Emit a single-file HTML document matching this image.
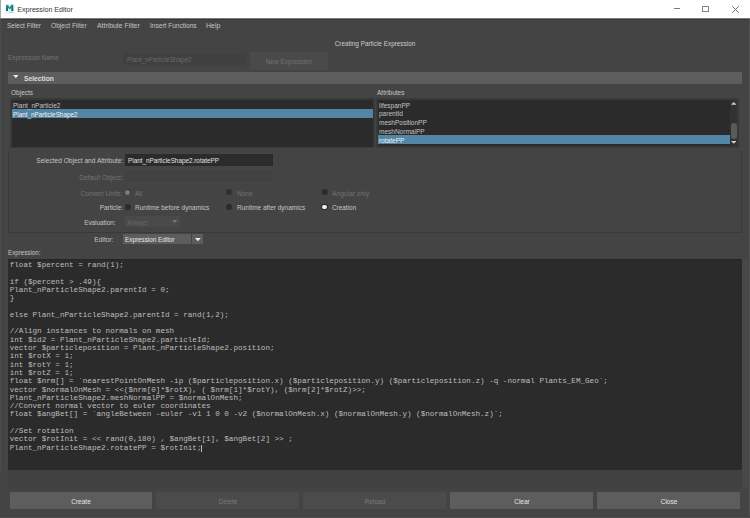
<!DOCTYPE html>
<html><head><meta charset="utf-8">
<style>
*{margin:0;padding:0;box-sizing:border-box}
html,body{width:750px;height:518px;overflow:hidden;background:#444444}
body{position:relative;font-family:"Liberation Sans",sans-serif;font-size:7.3px;color:#c4c4c4}
.a{position:absolute;white-space:nowrap}
.s{line-height:10px;-webkit-text-stroke:0px currentColor}
</style></head><body>
<div class="a" style="left:0px;top:0px;width:750px;height:18px;background:#ffffff;"></div>
<div class="a" style="left:0px;top:18px;width:750px;height:1px;background:#7a7a7a;"></div>
<div class="a" style="left:0px;top:19px;width:750px;height:1px;background:#383838;"></div>
<svg class="a" style="left:0;top:0" width="18" height="18" viewBox="0 0 18 18">
<defs><linearGradient id="mg" x1="0" y1="0" x2="0" y2="1"><stop offset="0" stop-color="#1a9a98"/><stop offset="1" stop-color="#08605f"/></linearGradient></defs>
<rect x="4.9" y="3.9" width="10" height="10" fill="#eaf5f5"/>
<path d="M6.1 10.9 V4.9 H8.1 L9.7 7.8 L11.1 4.8 H13.3 V10.9 H11.3 V7.4 L9.8 9.6 L8.1 7.4 V10.9 Z" fill="url(#mg)"/>
<rect x="8.8" y="11.6" width="4.2" height="1" fill="#86d3cf"/>
</svg>
<div class="a s" style="left:17.3px;transform-origin:0 50%;top:4.84px;color:#333333;transform:scaleX(1.0);font-size:7.1px;">Expression Editor</div>
<div class="a" style="left:674px;top:8px;width:6px;height:1px;background:#7c7c7c;"></div>
<div class="a" style="left:702px;top:5.6px;width:6.6px;height:6.4px;border:1px solid #858585;border-radius:0.6px"></div>
<svg class="a" style="left:731.9px;top:5.9px" width="7" height="7" viewBox="0 0 7 7"><path d="M0.3 0.3 L6.7 6.7 M6.7 0.3 L0.3 6.7" stroke="#6a6a6a" stroke-width="1"/></svg>
<div class="a s" style="left:6.7px;transform-origin:0 50%;top:21.3px;color:#c4c4c4;transform:scaleX(0.826);font-size:7.8px;">Select Filter</div>
<div class="a s" style="left:51.2px;transform-origin:0 50%;top:21.3px;color:#c4c4c4;transform:scaleX(0.847);font-size:7.8px;">Object Filter</div>
<div class="a s" style="left:97.2px;transform-origin:0 50%;top:21.3px;color:#c4c4c4;transform:scaleX(0.88);font-size:7.8px;">Attribute Filter</div>
<div class="a s" style="left:150px;transform-origin:0 50%;top:21.3px;color:#c4c4c4;transform:scaleX(0.84);font-size:7.8px;">Insert Functions</div>
<div class="a s" style="left:206.4px;transform-origin:0 50%;top:21.3px;color:#c4c4c4;transform:scaleX(0.904);font-size:7.8px;">Help</div>
<div class="a s" style="left:175px;width:400px;text-align:center;transform-origin:50% 50%;top:38.6px;color:#cccccc;transform:scaleX(0.819);font-size:7.8px;">Creating Particle Expression</div>
<div class="a s" style="left:7.9px;transform-origin:0 50%;top:53.1px;color:#737373;transform:scaleX(0.825);font-size:7.8px;">Expression Name</div>
<div class="a" style="left:123px;top:53px;width:124px;height:12.2px;background:#404040;"></div>
<div class="a s" style="left:126.7px;transform-origin:0 50%;top:54.7px;color:#6a6a6a;transform:scaleX(0.813);font-size:7.8px;">Plant_nParticleShape2</div>
<div class="a" style="left:249.8px;top:51.8px;width:78.2px;height:18.1px;background:#4a4a4a;"></div>
<div class="a s" style="left:88.5px;width:400px;text-align:center;transform-origin:50% 50%;top:56.8px;color:#727272;transform:scaleX(0.827);font-size:7.8px;">New Expression</div>
<div class="a" style="left:7.8px;top:72px;width:734.2px;height:11.5px;background:#5d5d5d;"></div>
<svg class="a" style="left:12.5px;top:74.9px" width="5.7" height="3.2" viewBox="0 0 5.7 3.2"><path d="M0 0 H5.7 L2.85 3.2 Z" fill="#e8e8e8"/></svg>
<div class="a s" style="left:24.3px;top:73.8px;font-weight:bold;color:#dddddd;transform:scaleX(0.92);transform-origin:0 50%">Selection</div>
<div class="a s" style="left:10.8px;transform-origin:0 50%;top:88.0px;color:#c4c4c4;transform:scaleX(0.835);font-size:7.8px;">Objects</div>
<div class="a s" style="left:376.8px;transform-origin:0 50%;top:88.0px;color:#c4c4c4;transform:scaleX(0.835);font-size:7.8px;">Attributes</div>
<div class="a" style="left:10px;top:98.3px;width:364.5px;height:49.8px;background:#393939;border-radius:2px"></div>
<div class="a" style="left:11.5px;top:99.8px;width:361.7px;height:46.8px;background:#2b2b2b;"></div>
<div class="a" style="left:11.5px;top:109px;width:361.7px;height:8.8px;background:#5285a6;"></div>
<div class="a s" style="left:12.5px;transform-origin:0 50%;top:100.8px;color:#c4c4c4;transform:scaleX(0.835);font-size:7.8px;">Plant_nParticle2</div>
<div class="a s" style="left:12.5px;transform-origin:0 50%;top:109.5px;color:#f2f2f2;transform:scaleX(0.813);font-size:7.8px;">Plant_nParticleShape2</div>
<div class="a" style="left:375.8px;top:98.3px;width:363px;height:49.8px;background:#393939;border-radius:2px"></div>
<div class="a" style="left:377.5px;top:99.9px;width:352.1px;height:46.6px;background:#2b2b2b;"></div>
<div class="a" style="left:729.6px;top:99.9px;width:7.2px;height:46.6px;background:#323232;"></div>
<div class="a s" style="left:378.9px;transform-origin:0 50%;top:100.7px;color:#c4c4c4;transform:scaleX(0.835);font-size:7.8px;">lifespanPP</div>
<div class="a s" style="left:378.9px;transform-origin:0 50%;top:109.4px;color:#c4c4c4;transform:scaleX(0.835);font-size:7.8px;">parentId</div>
<div class="a s" style="left:378.9px;transform-origin:0 50%;top:118.1px;color:#c4c4c4;transform:scaleX(0.835);font-size:7.8px;">meshPositionPP</div>
<div class="a s" style="left:378.9px;transform-origin:0 50%;top:126.8px;color:#c4c4c4;transform:scaleX(0.835);font-size:7.8px;">meshNormalPP</div>
<div class="a" style="left:377.5px;top:135.3px;width:352.1px;height:8.8px;background:#5285a6;"></div>
<div class="a s" style="left:378.9px;transform-origin:0 50%;top:135.5px;color:#f2f2f2;transform:scaleX(0.835);font-size:7.8px;">rotatePP</div>
<svg class="a" style="left:730.8px;top:102.4px" width="5.6" height="2.8" viewBox="0 0 5.6 2.8"><path d="M0 2.8 H5.6 L2.8 0 Z" fill="#cfcfcf"/></svg>
<div class="a" style="left:730.8px;top:122.9px;width:6px;height:16px;border-radius:3px;background:#5a5a5a"></div>
<svg class="a" style="left:730.8px;top:141.3px" width="5.6" height="2.8" viewBox="0 0 5.6 2.8"><path d="M0 0 H5.6 L2.8 2.8 Z" fill="#cfcfcf"/></svg>
<div class="a" style="left:8px;top:151.3px;width:734px;height:81.6px;border:1px solid #3a3a3a;border-top-color:#424242"></div>
<div class="a s" style="right:627.2px;transform-origin:100% 50%;top:155.5px;color:#c4c4c4;transform:scaleX(0.842);font-size:7.8px;">Selected Object and Attribute:</div>
<div class="a" style="left:124.5px;top:153.6px;width:148.2px;height:12px;background:#2b2b2b;"></div>
<div class="a s" style="left:128.3px;transform-origin:0 50%;top:156.1px;color:#e4e4e4;transform:scaleX(0.813);font-size:7.8px;">Plant_nParticleShape2.rotatePP</div>
<div class="a s" style="right:627.2px;transform-origin:100% 50%;top:172.8px;color:#737373;transform:scaleX(0.841);font-size:7.8px;">Default Object:</div>
<div class="a" style="left:124.5px;top:170.4px;width:148.2px;height:12px;background:#414141;"></div>
<div class="a s" style="right:627.2px;transform-origin:100% 50%;top:188.9px;color:#737373;transform:scaleX(0.848);font-size:7.8px;">Convert Units:</div>
<div class="a" style="left:124.6px;top:189.4px;width:6.0px;height:6.0px;border-radius:50%;background:#333333"></div>
<div class="a" style="left:125.3px;top:190.1px;width:4.6px;height:4.6px;border-radius:50%;background:#7a7a7a"></div>
<div class="a s" style="left:135.3px;transform-origin:0 50%;top:188.9px;color:#737373;transform:scaleX(0.835);font-size:7.8px;">All</div>
<div class="a" style="left:226.0px;top:189.4px;width:6.0px;height:6.0px;border-radius:50%;background:#2e2e2e"></div>
<div class="a s" style="left:236.7px;transform-origin:0 50%;top:188.9px;color:#737373;transform:scaleX(0.835);font-size:7.8px;">None</div>
<div class="a" style="left:321.8px;top:189.3px;width:6.0px;height:6.0px;border-radius:50%;background:#2d2d2d"></div>
<div class="a s" style="left:332.4px;transform-origin:0 50%;top:188.9px;color:#737373;transform:scaleX(0.853);font-size:7.8px;">Angular only</div>
<div class="a s" style="right:627.2px;transform-origin:100% 50%;top:203.2px;color:#c4c4c4;transform:scaleX(0.835);font-size:7.8px;">Particle:</div>
<div class="a" style="left:124.6px;top:204.1px;width:6.0px;height:6.0px;border-radius:50%;background:#2b2b2b"></div>
<div class="a s" style="left:135.4px;transform-origin:0 50%;top:203.2px;color:#c4c4c4;transform:scaleX(0.839);font-size:7.8px;">Runtime before dynamics</div>
<div class="a" style="left:226.0px;top:204.1px;width:6.0px;height:6.0px;border-radius:50%;background:#2b2b2b"></div>
<div class="a s" style="left:236.9px;transform-origin:0 50%;top:203.2px;color:#c4c4c4;transform:scaleX(0.832);font-size:7.8px;">Runtime after dynamics</div>
<div class="a" style="left:321.3px;top:203.8px;width:6.4px;height:6.4px;border-radius:50%;background:#2b2b2b"></div>
<div class="a" style="left:322.1px;top:204.6px;width:4.8px;height:4.8px;border-radius:50%;background:#eeeeee"></div>
<div class="a s" style="left:332.4px;transform-origin:0 50%;top:203.2px;color:#c4c4c4;transform:scaleX(0.821);font-size:7.8px;">Creation</div>
<div class="a s" style="right:634.4px;transform-origin:100% 50%;top:218.3px;color:#c4c4c4;transform:scaleX(0.814);font-size:7.8px;">Evaluation:</div>
<div class="a" style="left:125px;top:216px;width:55px;height:11px;background:#4a4a4a;"></div>
<div class="a s" style="left:126.8px;transform-origin:0 50%;top:217.8px;color:#666666;transform:scaleX(0.835);font-size:7.8px;">Always</div>
<svg class="a" style="left:172.3px;top:220.3px" width="5.5" height="3" viewBox="0 0 5.5 3"><path d="M0 0 H5.5 L2.75 3 Z" fill="#777777"/></svg>
<div class="a s" style="right:636px;transform-origin:100% 50%;top:234.7px;color:#c4c4c4;transform:scaleX(0.856);font-size:7.8px;">Editor:</div>
<div class="a" style="left:123px;top:233.8px;width:68px;height:10.6px;background:#5d5d5d;"></div>
<div class="a" style="left:191.5px;top:233.8px;width:11.5px;height:10.6px;background:#5d5d5d;"></div>
<div class="a s" style="left:125px;transform-origin:0 50%;top:234.6px;color:#e8e8e8;transform:scaleX(0.811);font-size:7.8px;">Expression Editor</div>
<svg class="a" style="left:194.8px;top:237.5px" width="5.8" height="3.3" viewBox="0 0 5.8 3.3"><path d="M0 0 H5.8 L2.9 3.3 Z" fill="#eeeeee"/></svg>
<div class="a s" style="left:7.6px;transform-origin:0 50%;top:247.6px;color:#c4c4c4;transform:scaleX(0.795);font-size:7.8px;">Expression:</div>
<div class="a" style="left:8px;top:470px;width:734.4px;height:18.5px;background:#414141;"></div>
<div class="a" style="left:742.4px;top:259px;width:6.3px;height:229.5px;background:#484848;"></div>
<div class="a" style="left:8px;top:258.8px;width:734px;height:211px;background:#2b2b2b;"></div>
<div class="a" style="left:8px;top:258.8px;width:734px;height:1px;background:#252525;"></div>
<pre class="a" style="white-space:pre;left:9.7px;top:261.1px;font-family:'Liberation Mono',monospace;font-size:7.62px;line-height:8.3px;color:#bdbdbd">float $percent = rand(1);

if ($percent &gt; .49){
Plant_nParticleShape2.parentId = 0;
}

else Plant_nParticleShape2.parentId = rand(1,2);

//Align instances to normals on mesh
int $id2 = Plant_nParticleShape2.particleId;
vector $particleposition = Plant_nParticleShape2.position;
int $rotX = 1;
int $rotY = 1;
int $rotZ = 1;
float $nrm[] = `nearestPointOnMesh -ip ($particleposition.x) ($particleposition.y) ($particleposition.z) -q -normal Plants_EM_Geo`;
vector $normalOnMesh = &lt;&lt;($nrm[0]*$rotX), ( $nrm[1]*$rotY), ($nrm[2]*$rotZ)&gt;&gt;;
Plant_nParticleShape2.meshNormalPP = $normalOnMesh;
//Convert normal vector to euler coordinates
float $angBet[] = `angleBetween -euler -v1 1 0 0 -v2 ($normalOnMesh.x) ($normalOnMesh.y) ($normalOnMesh.z)`;

//Set rotation
vector $rotInit = &lt;&lt; rand(0,180) , $angBet[1], $angBet[2] &gt;&gt; ;
Plant_nParticleShape2.rotatePP = $rotInit;</pre>
<div class="a" style="left:200.8px;top:444.8px;width:0.8px;height:7px;background:#bbbbbb;"></div>
<div class="a" style="left:10px;top:491.9px;width:142px;height:16.9px;background:#5d5d5d;"></div>
<div class="a s" style="left:-119.0px;width:400px;text-align:center;transform-origin:50% 50%;top:497.1px;color:#e6e6e6;transform:scaleX(0.835);font-size:7.8px;">Create</div>
<div class="a" style="left:156px;top:491.9px;width:143px;height:16.9px;background:#4b4b4b;"></div>
<div class="a s" style="left:27.5px;width:400px;text-align:center;transform-origin:50% 50%;top:497.1px;color:#7a7a7a;transform:scaleX(0.835);font-size:7.8px;">Delete</div>
<div class="a" style="left:302.8px;top:491.9px;width:143.6px;height:16.9px;background:#4b4b4b;"></div>
<div class="a s" style="left:174.60000000000002px;width:400px;text-align:center;transform-origin:50% 50%;top:497.1px;color:#7a7a7a;transform:scaleX(0.835);font-size:7.8px;">Reload</div>
<div class="a" style="left:449.8px;top:491.9px;width:143.4px;height:16.9px;background:#5d5d5d;"></div>
<div class="a s" style="left:321.5px;width:400px;text-align:center;transform-origin:50% 50%;top:497.1px;color:#e6e6e6;transform:scaleX(0.835);font-size:7.8px;">Clear</div>
<div class="a" style="left:597px;top:491.9px;width:143px;height:16.9px;background:#5d5d5d;"></div>
<div class="a s" style="left:468.5px;width:400px;text-align:center;transform-origin:50% 50%;top:497.1px;color:#e6e6e6;transform:scaleX(0.835);font-size:7.8px;">Close</div>
<div class="a" style="left:0px;top:0px;width:0.9px;height:18px;background:#a5abad;"></div>
<div class="a" style="left:0px;top:19px;width:1px;height:451px;background:#484e50;"></div>
<div class="a" style="left:0px;top:470px;width:1px;height:48px;background:#464646;"></div>
<div class="a" style="left:748.7px;top:19px;width:1.3px;height:499px;background:#515151;"></div>
<div class="a" style="left:0px;top:516px;width:750px;height:1px;background:#414141;"></div>
<div class="a" style="left:0px;top:517px;width:750px;height:1px;background:#4f4f4f;"></div>
</body></html>
